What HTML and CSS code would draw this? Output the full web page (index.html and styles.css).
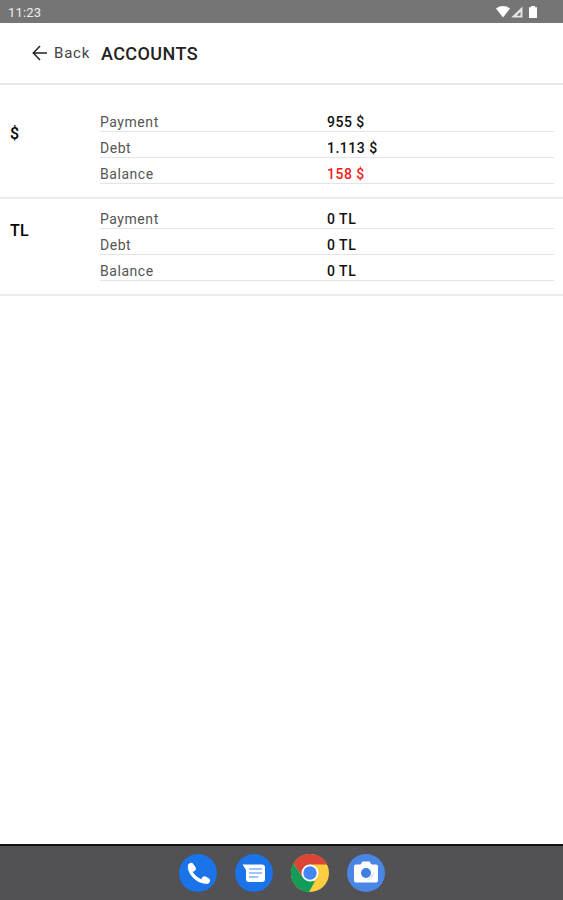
FILE: index.html
```
<!DOCTYPE html>
<html lang="en">
<head>
    <meta charset="UTF-8">
    <meta name="viewport" content="width=device-width, initial-scale=1.0">
    <title>Accounts</title>
    <link rel="stylesheet" href="styles.css">
</head>
<body>
    <div class="status-bar">
        <span class="time">11:23</span>
        <svg class="status-icons" width="42" height="14" viewBox="0 0 42 14">
            <path d="M0 3.5C4 0.2 10 0.2 14 3.5L7 12.5Z" fill="#fff"/>
            <path d="M15.2 12.5L26.5 1.5V12.5Z" fill="#e6e6e6"/>
            <path d="M20.5 10.8L24.500 6.800V10.8Z" fill="#777"/>
            <path d="M33 2.2H35V1H39V2.2H41V13H33Z" fill="#fff"/>
        </svg>
    </div>

    <header class="header">
        <a class="back">
            <svg width="16" height="16" viewBox="0 0 16 16" fill="none" stroke="#222" stroke-width="1.5">
                <path d="M8 1L1.3 8L8 15M1.5 8H15"/>
            </svg>
            <span>Back</span>
        </a>
        <h1>ACCOUNTS</h1>
    </header>

    <main>
        <section class="account first">
            <div class="currency">$</div>
            <div class="rows">
                <div class="row"><span>Payment</span><b>955 $</b></div>
                <div class="row"><span>Debt</span><b>1.113 $</b></div>
                <div class="row"><span>Balance</span><b class="negative">158 $</b></div>
            </div>
        </section>
        <section class="account">
            <div class="currency">TL</div>
            <div class="rows">
                <div class="row"><span>Payment</span><b>0 TL</b></div>
                <div class="row"><span>Debt</span><b>0 TL</b></div>
                <div class="row"><span>Balance</span><b>0 TL</b></div>
            </div>
        </section>
    </main>

    <nav class="dock">
        <!-- phone -->
        <svg viewBox="0 0 38 38">
            <circle cx="19" cy="19" r="19" fill="#1a73e8"/>
            <g fill="none" stroke="#fff" stroke-linecap="round">
                <path d="M10.500 13C11 20 18 27 26 28" stroke-width="3.500"/>
                <path d="M12 12L13.800 14.500M25.500 25.300L28 26.800" stroke-width="6"/>
            </g>
        </svg>
        <!-- messages -->
        <svg viewBox="0 0 38 38">
            <circle cx="19" cy="19" r="19" fill="#1a73e8"/>
            <path d="M7.500 10.500H27Q30 10.500 30 13.500V25Q30 28 27 28H14Q11 28 11 25V16Z" fill="#fff"/>
            <path d="M14 15H27M14 19H27M14 23H23.500" stroke="#a3c5f6" stroke-width="2.200"/>
        </svg>
        <!-- browser -->
        <svg viewBox="0 0 38 38">
            <circle cx="19" cy="19" r="19" fill="#ffcd40"/>
            <path d="M2.500 9.500L11.600 23.200L19 27.500L24 27L18 38A19 19 0 0 1 2.500 9.500Z" fill="#0f9d58"/>
            <path d="M2.500 9.500A19 19 0 0 1 36 10.500H19L11.600 23.200Z" fill="#db4437"/>
            <circle cx="19" cy="19" r="8.500" fill="#fff"/>
            <circle cx="19" cy="19" r="6.700" fill="#4285f4"/>
        </svg>
        <!-- camera -->
        <svg viewBox="0 0 38 38">
            <circle cx="19" cy="19" r="19" fill="#4a86e4"/>
            <path d="M9 10.500H13.500L15.500 7.500H22.500L24.500 10.500H29Q31 10.500 31 12.500V26.500Q31 28.500 29 28.500H9Q7 28.500 7 26.500V12.500Q7 10.500 9 10.500Z" fill="#fff"/>
            <path d="M23 23L27 17.500A8 8 0 0 1 20 26.500Z" fill="#e4e8ed"/>
            <circle cx="19" cy="19" r="5" fill="#3f7fe0"/>
        </svg>
    </nav>
</body>
</html>
```
FILE: styles.css
```
body {
    font-family: Roboto, sans-serif;
    background-color: #fff;
    margin: 0;
    height: 100vh;
    display: flex;
    flex-direction: column;
}

.status-bar {
    background-color: #757575;
    height: 23px;
    padding: 0 25px 0 8px;
    display: flex;
    justify-content: space-between;
    align-items: center;
    box-sizing: border-box;
}

.time {
    color: #eee;
    font-size: 13px;
    letter-spacing: 0.2px;
    padding-top: 2px;
}

.status-icons {
    padding-top: 1px;
}

.header {
    height: 60px;
    padding-left: 32px;
    display: flex;
    align-items: center;
    border-bottom: 2px solid #e9e9e9;
}

.back {
    display: flex;
    align-items: center;
    gap: 6px;
    width: 69px;
    color: #444;
    font-size: 15px;
    letter-spacing: 0.8px;
}

h1 {
    color: #222;
    font-size: 18px;
    font-weight: 500;
    letter-spacing: 0.4px;
    margin: 0;
}

main {
    flex: 1;
}

.account {
    display: flex;
    padding: 4px 9px 13px 10px;
    border-bottom: 2px solid #ececec;
}

.account.first {
    padding-top: 21px;
}

.currency {
    width: 90px;
    padding-top: 18px;
    font-size: 16px;
    line-height: 20px;
    font-weight: 500;
    letter-spacing: 0.3px;
    color: #000;
}

.rows {
    flex: 1;
}

.row {
    display: grid;
    grid-template-columns: 1fr 1fr;
    height: 25px;
    line-height: 32px;
    border-bottom: 1px solid #e4e4e4;
    font-size: 14px;
}

.row span {
    color: #555;
    letter-spacing: 0.55px;
}

.row b {
    color: #111;
    font-weight: 500;
    letter-spacing: 0.5px;
}

.row .negative {
    color: #f01c1c;
}

.dock {
    height: 56px;
    box-sizing: border-box;
    border-top: 2px solid #111;
    background-color: #525254;
    display: flex;
    justify-content: center;
    align-items: center;
    gap: 18px;
}

.dock svg {
    width: 38px;
    height: 38px;
}
```
